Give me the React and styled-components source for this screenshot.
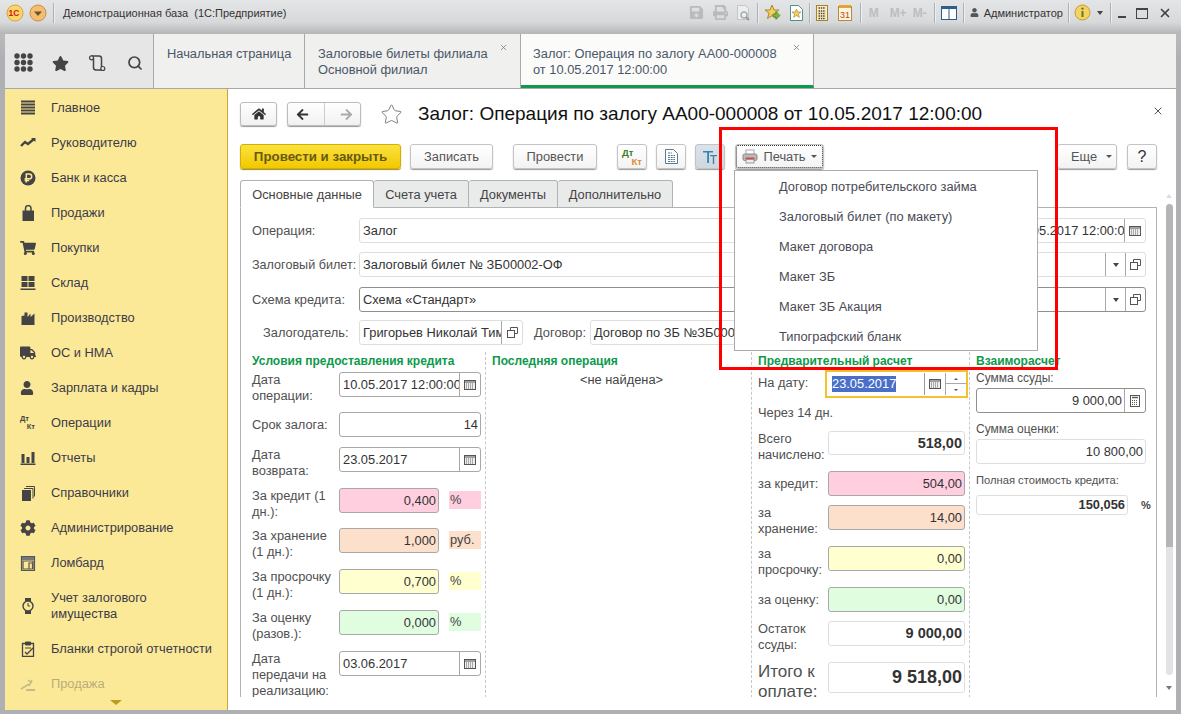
import styled, { createGlobalStyle } from 'styled-components';
import { FaStar, FaHome, FaArrowLeft, FaArrowRight, FaShoppingCart, FaTruck, FaUser, FaCog, FaPrint, FaSave } from 'react-icons/fa';
import { Search, Star, X } from 'lucide-react';

const Global = createGlobalStyle`
  html, body { margin: 0; padding: 0; overflow: hidden; background: #b4b5b8; }
  * { box-sizing: border-box; }
`;

const Window = styled.div`
  width: 1181px;
  height: 714px;
  display: flex;
  flex-direction: column;
  padding: 0 5px 4px;
  font-family: "Liberation Sans", Arial, sans-serif;
  font-size: 12.85px;
  color: #444;
  background: linear-gradient(#dcdde0, #b9babc 34px, #aeb0b3 60px);
  overflow: hidden;
`;

const TitleBar = styled.div`
  height: 34px;
  margin: 0 -5px;
  padding: 0 9px 9px 6px;
  display: flex;
  align-items: center;
  flex: none;
  background: linear-gradient(#e4e5e7, #d8d9db 65%, #b3b5b6);
`;

const TitleText = styled.span`
  margin-left: 3px;
  font-size: 11px;
  color: #333;
  white-space: pre;
`;

const TitleTools = styled.div`
  margin-left: auto;
  display: flex;
  align-items: center;
`;

const Sep = styled.i`
  width: 1px;
  height: 20px;
  margin: 0 ${(p) => p.$m ?? 6}px;
  background: #aeb0b2;
  box-shadow: 1px 0 0 #eee;
`;

const ToolSlot = styled.span`
  display: inline-flex;
  align-items: center;
  justify-content: center;
  margin-right: ${(p) => p.$gap ?? 7}px;
  color: ${(p) => p.$color || '#b9bbbd'};
`;

const MemKey = styled.b`
  width: ${(p) => p.$w}px;
  margin-right: ${(p) => p.$mr ?? 6}px;
  font-size: 12px;
  color: #bcbdbe;
  text-align: center;
`;

const UserName = styled.span`
  font-size: 11px;
  color: #333;
  margin-left: 5px;
`;

const TabStrip = styled.div`
  height: 55px;
  flex: none;
  display: flex;
  border-bottom: 1px solid #a5a7a8;
  background: #f0f0ee;
`;

const QuickIcons = styled.div`
  width: 149px;
  display: flex;
  align-items: center;
  padding: 4px 0 0 9px;
  background: #e6e6e6;
  border-right: 1px solid #a9a9a9;
  color: #444;
`;

const QuickSlot = styled.span`
  display: flex;
  margin-left: ${(p) => p.$ml || 0}px;
`;

const OpenTab = styled.div`
  position: relative;
  width: ${(p) => p.$w}px;
  flex: none;
  padding: 12px 0 0 ${(p) => p.$pl ?? 13}px;
  line-height: 16px;
  color: #4a5668;
  border-right: 1px solid #a9a9a9;
  background: ${(p) => (p.$active ? '#fbfbfa' : '#f0f0ee')};
  border-bottom: ${(p) => (p.$active ? '3px solid #0d9a4e' : 'none')};
`;

const TabClose = styled(X)`
  position: absolute;
  top: 9px;
  right: 12px;
  color: #777;
`;

const Body = styled.div`
  flex: 1;
  min-height: 0;
  display: flex;
`;

const Sidebar = styled.nav`
  position: relative;
  width: 223px;
  flex: none;
  padding-top: 1px;
  background: #fbe998;
  border-right: 1px solid #c7a92e;
  overflow: hidden;
`;

const NavItem = styled.div`
  height: ${(p) => (p.$tall ? 51 : 35)}px;
  display: flex;
  align-items: center;
  color: #3b3b48;
  line-height: 16px;
  opacity: ${(p) => (p.$faded ? 0.35 : 1)};
`;

const NavIcon = styled.span`
  width: 46px;
  flex: none;
  padding-left: 15px;
  display: flex;
  color: #444;
`;

const MoreArrow = styled.i`
  position: absolute;
  left: 105px;
  bottom: 5px;
  border: 6px solid transparent;
  border-bottom: 0;
  border-top: 5px solid #b79f1c;
`;

const Main = styled.main`
  position: relative;
  flex: 1;
  min-width: 0;
  display: flex;
  flex-direction: column;
  padding: 13px 0 0 12px;
  background: #fff;
`;

const HeaderRow = styled.div`
  height: 24px;
  flex: none;
  margin: 0 19px 18px 0;
  display: flex;
  align-items: center;
`;

const FormTitle = styled.h1`
  margin: 0 0 0 15px;
  font-size: 19px;
  font-weight: normal;
  color: #111;
  white-space: nowrap;
`;

const SquareBtn = styled.div`
  width: ${(p) => p.$w}px;
  height: 24px;
  flex: none;
  display: flex;
  align-items: center;
  justify-content: center;
  margin-right: ${(p) => p.$mr ?? 10}px;
  color: #333;
  background: linear-gradient(#fff, #f1f1f1);
  border: 1px solid #bcbcbc;
  border-radius: 3px;
  box-shadow: 0 1px 1px #999;
`;

const NavPair = styled(SquareBtn)`
  justify-content: space-around;
  padding: 0;
`;

const NavDivider = styled.i`
  width: 1px;
  height: 100%;
  background: #ccc;
`;

const CloseForm = styled(X)`
  margin: 0 -7px 0 auto;
  color: #555;
  position: relative;
  top: -3px;
`;

const CommandBar = styled.div`
  height: 26px;
  flex: none;
  margin: 0 19px 10px 0;
  display: flex;
  align-items: flex-start;
`;

const Btn = styled.div`
  height: 25px;
  width: ${(p) => p.$w}px;
  flex: none;
  margin-right: ${(p) => p.$mr ?? 10}px;
  display: flex;
  align-items: center;
  justify-content: center;
  gap: 5px;
  color: #555;
  background: ${(p) => (p.$pressed ? 'linear-gradient(#dbe2ea, #cfd7e1)' : 'linear-gradient(#fff, #f3f3f3)')};
  border: 1px solid #c4c4c4;
  border-radius: 3px;
  box-shadow: 0 1px 1px #999;
`;

const PrimaryBtn = styled(Btn)`
  font-weight: bold;
  font-size: 13.3px;
  color: #655a14;
  background: linear-gradient(#fbe23f, #f3c800);
  border-color: #d3b000;
  box-shadow: 0 1px 1px #a08a20;
`;

const PrintBtn = styled(Btn)`
  outline: 1px dotted #333;
  outline-offset: -2px;
`;

const MoreBtn = styled(Btn)`
  margin-left: auto;
  padding-left: 9px;
  gap: 9px;
`;

const HelpBtn = styled(Btn)`
  font-size: 16px;
  color: #333;
`;

const Caret = styled.i`
  border: 3px solid transparent;
  border-bottom: 0;
  border-top: 3px solid #555;
`;

const DtKt = styled.span`
  position: relative;
  width: ${(p) => p.$size || 20}px;
  height: ${(p) => p.$size || 18}px;
  font: bold ${(p) => (p.$size ? 7.5 : 9.5)}px/${(p) => (p.$size ? 7.5 : 9)}px "Liberation Sans", sans-serif;
  color: ${(p) => p.$c1 || '#3f7d1c'};
  display: block;
  & > b { position: absolute; right: 0; bottom: 0; color: ${(p) => p.$c2 || '#e08a3a'}; }
`;

const PageTabs = styled.div`
  height: 28px;
  flex: none;
  display: flex;
  align-items: stretch;
  position: relative;
  margin-bottom: -1px;
`;

const PageTab = styled.div`
  width: ${(p) => p.$w}px;
  display: flex;
  align-items: center;
  justify-content: center;
  border: 1px solid #b2b2b2;
  border-left: ${(p) => (p.$first ? '1px solid #b2b2b2' : 'none')};
  border-radius: 3px 3px 0 0;
  color: #444;
  background: ${(p) => (p.$active ? '#fff' : '#e9eaea')};
  border-bottom: ${(p) => (p.$active ? '1px solid #fff' : '1px solid #b2b2b2')};
  position: relative;
  z-index: 1;
`;

const PanelRow = styled.div`
  flex: 1;
  min-height: 0;
  display: flex;
  margin-bottom: 13px;
`;

const Panel = styled.div`
  flex: 1;
  min-width: 0;
  padding: 10px 10px 0 11px;
  border: 1px solid #b2b2b2;
  border-bottom: none;
  overflow: hidden;
`;

const ScrollTrack = styled.div`
  width: 19px;
  flex: none;
  margin-top: -15px;
  display: flex;
  flex-direction: column;
  align-items: center;
  padding: 0 0 0 5px;
`;

const ScrollUp = styled.i`
  margin-top: 2px;
  border: 3px solid transparent;
  border-top: 0;
  border-bottom: 4px solid #ddd;
`;

const ScrollRail = styled.div`
  width: 7px;
  height: 471px;
  margin: 6px 0 11px;
  border-radius: 4px;
  background: linear-gradient(#b5b5b5 0, #b5b5b5 343px, #e3e3e3 343px);
`;

const ScrollDown = styled.i`
  border: 3px solid transparent;
  border-bottom: 0;
  border-top: 4px solid #777;
`;

const Row = styled.div`
  display: flex;
  height: ${(p) => p.$h}px;
  padding-left: ${(p) => p.$pl || 0}px;
  flex: none;
`;

const RowLabel = styled.div`
  width: ${(p) => p.$w}px;
  flex: none;
  margin-left: ${(p) => p.$ml || 0}px;
  line-height: ${(p) => p.$lh || 16}px;
  font-size: ${(p) => p.$fs || 12.85}px;
  color: #505050;
  height: ${(p) => (p.$center ? `${p.$center}px` : 'auto')};
  display: ${(p) => (p.$center ? 'flex' : 'block')};
  align-items: center;
  white-space: pre-line;
`;

const Field = styled.div`
  width: ${(p) => (p.$w ? `${p.$w}px` : 'auto')};
  flex: ${(p) => (p.$w ? 'none' : 1)};
  min-width: 0;
  height: ${(p) => p.$h || 25}px;
  display: flex;
  align-items: stretch;
  background: ${(p) => p.$bg || '#fff'};
  border: 1px solid ${(p) => (p.$light ? '#dedede' : p.$dark ? '#8f8f8f' : '#a8a8a8')};
  border-radius: 3px;
  color: #333;
`;

const FieldText = styled.span`
  flex: 1;
  min-width: 0;
  overflow: hidden;
  white-space: nowrap;
  padding: 0 2px 0 3px;
  text-align: ${(p) => (p.$right ? 'right' : 'left')};
  line-height: ${(p) => (p.$h || 25) - 2}px;
  font-weight: ${(p) => (p.$bold ? 'bold' : 'normal')};
  font-size: ${(p) => p.$fs || 12.85}px;
  color: #333;
`;

const FieldBtn = styled.span`
  width: ${(p) => p.$w || 21}px;
  flex: none;
  display: flex;
  align-items: center;
  justify-content: center;
  border-left: 1px solid #a8a8a8;
  color: #555;
`;

const Columns = styled.div`
  display: flex;
  height: 346px;
  margin-top: 7px;
`;

const Col = styled.div`
  width: ${(p) => (p.$w ? `${p.$w}px` : 'auto')};
  flex: ${(p) => (p.$w ? 'none' : 1)};
  min-width: 0;
  padding-left: ${(p) => (p.$first ? 0 : 6)}px;
  padding-right: ${(p) => p.$pr || 0}px;
  border-left: ${(p) => (p.$first ? 'none' : '1px dashed #c8c8c8')};
`;

const GroupTitle = styled.div`
  height: ${(p) => p.$h || 20}px;
  line-height: 18px;
  font-weight: bold;
  font-size: 12px;
  color: #0c9a4c;
  white-space: nowrap;
`;

const NotFound = styled.div`
  text-align: center;
  line-height: 16px;
  color: #444;
`;

const Unit = styled.span`
  width: 32px;
  height: 18px;
  margin: 3px 0 0 10px;
  padding-left: 1px;
  line-height: 18px;
  flex: none;
  background: ${(p) => p.$bg};
  color: #444;
`;

const DateFocus = styled.div`
  flex: 1;
  height: 28px;
  margin: 0 -3px;
  display: flex;
  align-items: center;
  border: 2px solid #f5c12e;
  background: #fff;
`;

const Selected = styled.span`
  margin-left: 5px;
  background: #4a6fc9;
  color: #fff;
  line-height: 16px;
  width: 64px;
`;

const CalBtn = styled(FieldBtn)`
  height: 22px;
  margin-left: auto;
  border-color: #999;
`;

const Spin = styled.span`
  width: 21px;
  height: 22px;
  flex: none;
  position: relative;
  border-left: 1px solid #a8a8a8;
  &::before { content: ''; position: absolute; left: 8px; top: 5px; border: 2px solid transparent; border-top: 0; border-bottom: 2px solid #555; }
  &::after { content: ''; position: absolute; left: 8px; bottom: 4px; border: 2px solid transparent; border-bottom: 0; border-top: 2px solid #555; }
`;

const SpinLine = styled.i`
  position: absolute;
  left: 0;
  right: 0;
  top: 10px;
  height: 1px;
  background: #aaa;
`;

const SmallLabel = styled.div`
  font-size: ${(p) => p.$fs || 12}px;
  line-height: 16px;
  color: #505050;
  margin: ${(p) => p.$m || 0};
  white-space: nowrap;
`;

const RowFlex = styled.div`
  display: flex;
  align-items: center;
`;

const PercentMark = styled.b`
  margin-left: 13px;
  font-size: 11px;
  color: #444;
`;

const Popup = styled.div`
  position: absolute;
  left: 506px;
  top: 81px;
  width: 304px;
  height: 181px;
  padding-top: 1px;
  background: #fff;
  border: 1px solid #ababab;
  z-index: 5;
`;

const PopupItem = styled.div`
  height: 30px;
  padding-left: 44px;
  line-height: 30px;
  color: #4a4a55;
  white-space: nowrap;
`;

const RedFrame = styled.div`
  position: absolute;
  left: 491px;
  top: 38px;
  width: 339px;
  height: 243px;
  border: 3px solid #f00;
  pointer-events: none;
  z-index: 6;
`;

const DropCaret = styled.i`
  border: 3.5px solid transparent;
  border-bottom: 0;
  border-top: 4px solid #444;
`;

/* icons */
const Svg = ({ s = 16, w, h, children, ...r }) => (
  <svg width={w || s} height={h || s} viewBox={`0 0 ${w || s} ${h || s}`} {...r}>{children}</svg>
);

const Logo1C = () => (
  <Svg s={18}>
    <circle cx="9" cy="9" r="8" fill="#f9d667" stroke="#d9a441" />
    <text x="2.5" y="12" fontSize="8.5" fontWeight="bold" fill="#d3141b" fontFamily="Liberation Sans">1С</text>
  </Svg>
);

const MenuBall = () => (
  <Svg s={18}>
    <circle cx="9" cy="9" r="8" fill="#f3bd72" stroke="#cf9042" />
    <path d="M5 7.5h8L9 12z" fill="#6b5233" />
  </Svg>
);

const Preview = () => (
  <Svg s={16}>
    <path d="M2.5.5h8l3 3v11h-11z" fill="#eee" stroke="#c3c5c6" />
    <circle cx="9" cy="10" r="3" fill="none" stroke="#9fb1b5" strokeWidth="1.5" />
    <path d="M11 12l3 3" stroke="#9a9a9a" strokeWidth="2" />
  </Svg>
);

const StarGo = () => (
  <Svg s={17}>
    <path d="M8 1l2 5h5l-4 3.2 1.5 5.3L8 11.5 3.5 14.5 5 9.2 1 6h5z" fill="#f4cf62" stroke="#a88a2c" />
    <path d="M9 10h3V7.500l4 4-4 4V13H9z" fill="#7cb83d" stroke="#4d7f1d" strokeWidth=".7" />
  </Svg>
);

const StarDoc = () => (
  <Svg w={13} h={16}>
    <path d="M.5.5h8l4 4v11H.5z" fill="#fff" stroke="#4f9089" />
    <path d="M6.5 4l1.200 3H11L8.400 9.200l1 3.200-2.900-2-2.900 2 1-3.200L2 7h3.300z" fill="#f4cf62" stroke="#9b822d" strokeWidth=".6" />
  </Svg>
);

const Calc = () => (
  <Svg w={12} h={16}>
    <rect x=".5" y=".5" width="11" height="15" fill="#f8edc8" stroke="#a9812d" />
    <path d="M2.500 3h7M2.500 6h7M2.500 8.500h7M2.500 11h7M2.500 13.500h7" stroke="#4d4d2d" strokeWidth="1.500" strokeDasharray="1.500 .8" />
  </Svg>
);

const Cal31 = () => (
  <Svg w={14} h={17}>
    <rect x=".5" y="2.500" width="13" height="14" fill="#fdf6de" stroke="#b8893a" />
    <path d="M1 1h12v3H1z" fill="#e2a33c" />
    <text x="2" y="14" fontSize="9" fill="#b54a20" fontFamily="Liberation Sans">31</text>
  </Svg>
);

const PanelsIcon = () => (
  <Svg s={16}>
    <rect x=".5" y="1.500" width="15" height="13" fill="#fff" stroke="#2e5d8f" />
    <path d="M8 2v12" stroke="#2e5d8f" />
    <path d="M1 2h14v2H1z" fill="#2e5d8f" />
  </Svg>
);

const InfoBall = () => (
  <Svg s={17}>
    <circle cx="8.500" cy="8.500" r="7.500" fill="#f5d264" stroke="#c79b35" />
    <path d="M8.500 7v6" stroke="#5f7c1d" strokeWidth="2" />
    <circle cx="8.500" cy="4.600" r="1.200" fill="#5f7c1d" />
  </Svg>
);

const Apps = () => (
  <Svg s={20}>
    {[3, 9.5, 16].flatMap((y) => [3, 9.5, 16].map((x) => <circle key={`${x}${y}`} cx={x} cy={y} r="2.700" fill="#444" />))}
  </Svg>
);

const HistoryScroll = () => (
  <Svg s={18}>
    <path d="M3 2h8a2.500 2.500 0 012.500 2.500V13M15 16H8a2.500 2.500 0 01-2.500-2.500V4" fill="none" stroke="#444" strokeWidth="1.500" />
    <circle cx="3.500" cy="3.800" r="2" fill="#e6e6e6" stroke="#444" strokeWidth="1.200" />
    <circle cx="14.800" cy="14.500" r="2" fill="#e6e6e6" stroke="#444" strokeWidth="1.200" />
  </Svg>
);

const CalendarMini = () => (
  <Svg w={12} h={10}>
    <rect x=".5" y=".5" width="11" height="9" fill="#eee" stroke="#555" />
    <path d="M1 2h10" stroke="#555" />
    <path d="M2 4h8M2 6h8M2 8h8" stroke="#666" strokeDasharray="1 1" />
  </Svg>
);

const CalcMini = () => (
  <Svg w={10} h={12}>
    <rect x=".5" y=".5" width="9" height="11" fill="#fff" stroke="#555" />
    <path d="M2 2.500h6" stroke="#555" strokeWidth="1.400" />
    <path d="M2 5.500h6M2 7.500h6M2 9.500h6" stroke="#555" strokeDasharray="1 1" />
  </Svg>
);

const Open = () => (
  <Svg s={11}>
    <path d="M3.500 3.500v-3h7v6h-3" fill="none" stroke="#555" />
    <rect x=".5" y="3.500" width="7" height="7" fill="none" stroke="#555" />
  </Svg>
);

const DocIcon = () => (
  <Svg w={13} h={15}>
    <path d="M.5.5h8l4 4v10H.5z" fill="#fff" stroke="#5a7a93" />
    <path d="M3 4h4M3 6.500h7M3 8.500h7M3 10.500h7M3 12.500h7" stroke="#5a7a93" strokeDasharray="2 .7" />
  </Svg>
);

const TtIcon = () => (
  <Svg w={16} h={16}>
    <path d="M1 2h10v1.600H7V14H5.200V3.600H1z" fill="#2f86b0" />
    <path d="M8 6h7v1.300h-2.800V15h-1.400V7.300H8z" fill="#4d7f9a" />
  </Svg>
);

const PrinterColor = () => (
  <Svg w={16} h={15}>
    <rect x="4" y="1" width="8" height="4.500" fill="#fff" stroke="#aaa" />
    <rect x="1" y="5" width="14" height="6.500" rx="1.500" fill="#b9b9b9" stroke="#888" />
    <rect x="3.500" y="8.500" width="9" height="2" fill="#d44" />
    <rect x="4" y="10.500" width="8" height="3.500" fill="#eee" stroke="#999" />
  </Svg>
);

const ic = { fill: '#444' };
const navIcons = {
  main: <Svg s={16}><path d="M1 2h14v2H1zM1 5h14v2H1zM1 8h14v2H1zM1 11h14v2H1zM1 14h14v2H1z" {...ic} transform="translate(0 -1.500)" /></Svg>,
  boss: <Svg s={16}><path d="M1 11l4-4 3 2 6-5" fill="none" stroke="#444" strokeWidth="2.400" /><path d="M11 3h4.500v4z" {...ic} /></Svg>,
  bank: <Svg s={16}><circle cx="8" cy="8" r="7.500" {...ic} /><path d="M6.300 12.500V4h3a2.300 2.300 0 010 4.800H4.600M4.600 10.600h4.600" fill="none" stroke="#fbe998" strokeWidth="1.500" /></Svg>,
  bag: <Svg s={16}><path d="M2.500 5.500h11.500V16H2.500z" {...ic} /><path d="M5.500 7V3.300a2.700 2.700 0 015.500 0V7" fill="none" stroke="#444" strokeWidth="1.500" /></Svg>,
  cart: <FaShoppingCart size={16} color="#444" />,
  store: <Svg s={16}><path d="M1.500 1h6v5h-6zM8.500 1h6v5h-6zM1.500 7h6v5h-6zM8.500 7h6v5h-6zM0.500 13.500h15V15H.5z" {...ic} /></Svg>,
  factory: <Svg s={16}><path d="M1.500 15V6l3-.5V2.500h3V7l3-3.500V7l4-3.500V15z" {...ic} /></Svg>,
  truck: <FaTruck size={16} color="#444" />,
  person: <FaUser size={14} color="#444" />,
  dtkt: <DtKt $c1="#444" $c2="#444" $size={15}>Дт<b>Кт</b></DtKt>,
  chart: <Svg s={16}><path d="M1.500 4h3v9h-3zM6.500 7h3v6h-3zM11.500 2h3v11h-3zM.5 13.500h15V15H.5z" {...ic} /></Svg>,
  books: <Svg s={16}><path d="M2 5h9v11H2z" {...ic} /><path d="M4 3.500h9v10M6 1.500h8.500v10" fill="none" stroke="#444" /></Svg>,
  gear: <FaCog size={16} color="#444" />,
  shop: <Svg s={16}><path d="M1.500 1.500h13v14h-13zM2 4h12M3 6h10v8H3zM9 8h3.500v6H9z" fill="none" stroke="#555" strokeWidth="1.200" /><path d="M2 2h12v3H2z" fill="#777" /></Svg>,
  watch: <Svg s={16}><path d="M5 0h6v3H5zM5 13h6v3H5z" {...ic} /><circle cx="8" cy="8" r="5" fill="none" stroke="#444" strokeWidth="1.400" /><path d="M8 5v3h2" fill="none" stroke="#444" /></Svg>,
  form: <Svg s={16}><path d="M2.500 2.500h11v13h-11z" fill="none" stroke="#444" strokeWidth="1.300" /><path d="M5.500 1h5v3h-5zM5 7h6" {...ic} stroke="#444" /><path d="M5 11l2 2 6-6" fill="none" stroke="#444" strokeWidth="1.300" /></Svg>,
  gavel: <Svg s={16}><path d="M1 13l8-5M8 4l4 3M12 4l-3 6" stroke="#666" fill="none" strokeWidth="1.500" /><path d="M6 13h9v2H6z" fill="#666" /></Svg>,
};

const navItems = [
  ['main', 'Главное'], ['boss', 'Руководителю'], ['bank', 'Банк и касса'], ['bag', 'Продажи'],
  ['cart', 'Покупки'], ['store', 'Склад'], ['factory', 'Производство'], ['truck', 'ОС и НМА'],
  ['person', 'Зарплата и кадры'], ['dtkt', 'Операции'], ['chart', 'Отчеты'], ['books', 'Справочники'],
  ['gear', 'Администрирование'], ['shop', 'Ломбард'],
];

const printMenu = ['Договор потребительского займа', 'Залоговый билет (по макету)', 'Макет договора', 'Макет ЗБ', 'Макет ЗБ Акация', 'Типографский бланк'];

const PINK = '#ffcfe0';
const PEACH = '#fde0cb';
const LEMON = '#ffffd0';
const MINT = '#e0fde0';

const App = () => {
  return (
    <Window>
      <Global />
      <TitleBar>
        <Logo1C />
        <QuickSlot $ml={5}><MenuBall /></QuickSlot>
        <Sep $m={6} />
        <TitleText>Демонстрационная база  (1С:Предприятие)</TitleText>
        <TitleTools>
          <ToolSlot $gap={9}><FaSave size={15} /></ToolSlot>
          <ToolSlot $gap={7}><FaPrint size={15} /></ToolSlot>
          <ToolSlot $gap={0}><Preview /></ToolSlot>
          <Sep />
          <ToolSlot $gap={9}><StarGo /></ToolSlot>
          <ToolSlot $gap={0}><StarDoc /></ToolSlot>
          <Sep />
          <ToolSlot $gap={10}><Calc /></ToolSlot>
          <ToolSlot $gap={0}><Cal31 /></ToolSlot>
          <Sep $m={8} />
          <MemKey $w={10} $mr={11}>M</MemKey>
          <MemKey $w={16}>M+</MemKey>
          <MemKey $w={16} $mr={0}>M-</MemKey>
          <Sep />
          <ToolSlot $gap={0}><PanelsIcon /></ToolSlot>
          <Sep />
          <ToolSlot $gap={0} $color="#555"><FaUser size={9} /></ToolSlot>
          <UserName>Администратор</UserName>
          <Sep $m={5} />
          <ToolSlot $gap={6}><InfoBall /></ToolSlot>
          <DropCaret />
          <Sep $m={7} />
          <ToolSlot $gap={10} $color="#444"><Svg w={8} h={14}><path d="M0 10h8v2H0z" fill="#444" /></Svg></ToolSlot>
          <ToolSlot $gap={10} $color="#444"><Svg s={12}><rect x=".5" y="1.500" width="11" height="10" fill="none" stroke="#444" /><path d="M0 1h12v2H0z" fill="#444" /></Svg></ToolSlot>
          <ToolSlot $gap={0} $color="#444"><X size={14} strokeWidth={3} /></ToolSlot>
        </TitleTools>
      </TitleBar>

      <TabStrip>
        <QuickIcons>
          <Apps />
          <QuickSlot $ml={18}><FaStar size={17} /></QuickSlot>
          <QuickSlot $ml={19}><HistoryScroll /></QuickSlot>
          <QuickSlot $ml={21}><Search size={16} strokeWidth={2.6} /></QuickSlot>
        </QuickIcons>
        <OpenTab $w={151}>Начальная страница</OpenTab>
        <OpenTab $w={216}>Залоговые билеты филиала<br />Основной филиал<TabClose size={9} /></OpenTab>
        <OpenTab $w={293} $active $pl={12}>Залог: Операция по залогу АА00-000008<br />от 10.05.2017 12:00:00<TabClose size={9} /></OpenTab>
      </TabStrip>

      <Body>
        <Sidebar>
          {navItems.map(([icon, label]) => (
            <NavItem key={label}><NavIcon>{navIcons[icon]}</NavIcon>{label}</NavItem>
          ))}
          <NavItem $tall><NavIcon>{navIcons.watch}</NavIcon>Учет залогового<br />имущества</NavItem>
          <NavItem><NavIcon>{navIcons.form}</NavIcon>Бланки строгой отчетности</NavItem>
          <NavItem $faded><NavIcon>{navIcons.gavel}</NavIcon>Продажа</NavItem>
          <MoreArrow />
        </Sidebar>

        <Main>
          <HeaderRow>
            <SquareBtn $w={37}><FaHome size={14} /></SquareBtn>
            <NavPair $w={74} $mr={19}>
              <FaArrowLeft size={13} />
              <NavDivider />
              <FaArrowRight size={13} color="#aaa" />
            </NavPair>
            <Star size={23} strokeWidth={1} color="#777" />
            <FormTitle>Залог: Операция по залогу АА00-000008 от 10.05.2017 12:00:00</FormTitle>
            <CloseForm size={12} />
          </HeaderRow>

          <CommandBar>
            <PrimaryBtn $w={161} $mr={9}>Провести и закрыть</PrimaryBtn>
            <Btn $w={83} $mr={20}>Записать</Btn>
            <Btn $w={84} $mr={20}>Провести</Btn>
            <Btn $w={30} $mr={9}><DtKt>Дт<b>Кт</b></DtKt></Btn>
            <Btn $w={30} $mr={9}><DocIcon /></Btn>
            <Btn $w={30} $pressed><TtIcon /></Btn>
            <PrintBtn $w={89}><PrinterColor />Печать<Caret /></PrintBtn>
            <MoreBtn $w={60}>Еще<Caret /></MoreBtn>
            <HelpBtn $w={30} $mr={0}>?</HelpBtn>
          </CommandBar>

          <PageTabs>
            <PageTab $w={134} $first $active>Основные данные</PageTab>
            <PageTab $w={95}>Счета учета</PageTab>
            <PageTab $w={89}>Документы</PageTab>
            <PageTab $w={115}>Дополнительно</PageTab>
          </PageTabs>

          <PanelRow>
            <Panel>
              <Row $h={34}>
                <RowLabel $w={107} $center={25}>Операция:</RowLabel>
                <Field $light><FieldText>Залог</FieldText></Field>
                <RowLabel $w={26} $ml={10} $center={25}>от:</RowLabel>
                <Field $w={136} $light>
                  <FieldText>10.05.2017 12:00:00</FieldText>
                  <FieldBtn><CalendarMini /></FieldBtn>
                </Field>
              </Row>
              <Row $h={35}>
                <RowLabel $w={107} $fs={12.6} $center={25}>Залоговый билет:</RowLabel>
                <Field $light>
                  <FieldText>Залоговый билет № ЗБ00002-ОФ</FieldText>
                  <FieldBtn $w={20}><DropCaret /></FieldBtn>
                  <FieldBtn $w={20}><Open /></FieldBtn>
                </Field>
              </Row>
              <Row $h={33}>
                <RowLabel $w={107} $center={25}>Схема кредита:</RowLabel>
                <Field $dark>
                  <FieldText>Схема «Стандарт»</FieldText>
                  <FieldBtn $w={20}><DropCaret /></FieldBtn>
                  <FieldBtn $w={20}><Open /></FieldBtn>
                </Field>
              </Row>
              <Row $h={25} $pl={11}>
                <RowLabel $w={96} $center={25}>Залогодатель:</RowLabel>
                <Field $w={164} $light>
                  <FieldText>Григорьев Николай Тимофеевич</FieldText>
                  <FieldBtn><Open /></FieldBtn>
                </Field>
                <RowLabel $w={56} $ml={11} $center={25}>Договор:</RowLabel>
                <Field $w={146} $light><FieldText>Договор по ЗБ №ЗБ00002-ОФ</FieldText></Field>
              </Row>

              <Columns>
                <Col $w={233} $first>
                  <GroupTitle>Условия предоставления кредита</GroupTitle>
                  <Row $h={40}>
                    <RowLabel $w={87}>{'Дата\nоперации:'}</RowLabel>
                    <Field $w={142}><FieldText>10.05.2017 12:00:00</FieldText><FieldBtn><CalendarMini /></FieldBtn></Field>
                  </Row>
                  <Row $h={35}>
                    <RowLabel $w={87} $center={25}>Срок залога:</RowLabel>
                    <Field $w={142}><FieldText $right>14</FieldText></Field>
                  </Row>
                  <Row $h={41}>
                    <RowLabel $w={87}>{'Дата\nвозврата:'}</RowLabel>
                    <Field $w={142}><FieldText>23.05.2017</FieldText><FieldBtn><CalendarMini /></FieldBtn></Field>
                  </Row>
                  <Row $h={40}>
                    <RowLabel $w={87}>{'За кредит (1\nдн.):'}</RowLabel>
                    <Field $w={100} $bg={PINK}><FieldText $right>0,400</FieldText></Field>
                    <Unit $bg={PINK}>%</Unit>
                  </Row>
                  <Row $h={41}>
                    <RowLabel $w={87}>{'За хранение\n(1 дн.):'}</RowLabel>
                    <Field $w={100} $bg={PEACH}><FieldText $right>1,000</FieldText></Field>
                    <Unit $bg={PEACH}>руб.</Unit>
                  </Row>
                  <Row $h={41}>
                    <RowLabel $w={87}>{'За просрочку\n(1 дн.):'}</RowLabel>
                    <Field $w={100} $bg={LEMON}><FieldText $right>0,700</FieldText></Field>
                    <Unit $bg={LEMON}>%</Unit>
                  </Row>
                  <Row $h={41}>
                    <RowLabel $w={87}>{'За оценку\n(разов.):'}</RowLabel>
                    <Field $w={100} $bg={MINT}><FieldText $right>0,000</FieldText></Field>
                    <Unit $bg={MINT}>%</Unit>
                  </Row>
                  <Row $h={48}>
                    <RowLabel $w={87}>{'Дата\nпередачи на\nреализацию:'}</RowLabel>
                    <Field $w={142}><FieldText>03.06.2017</FieldText><FieldBtn><CalendarMini /></FieldBtn></Field>
                  </Row>
                </Col>

                <Col $w={266}>
                  <GroupTitle>Последняя операция</GroupTitle>
                  <NotFound>&lt;не найдена&gt;</NotFound>
                </Col>

                <Col $w={218} $pr={4}>
                  <GroupTitle $h={18}>Предварительный расчет</GroupTitle>
                  <Row $h={35}>
                    <RowLabel $w={70} $center={25}>На дату:</RowLabel>
                    <DateFocus>
                      <Selected>23.05.2017</Selected>
                      <CalBtn><CalendarMini /></CalBtn>
                      <Spin><SpinLine /></Spin>
                    </DateFocus>
                  </Row>
                  <Row $h={26}><RowLabel $w={120} $center={16}>Через 14 дн.</RowLabel></Row>
                  <Row $h={40}>
                    <RowLabel $w={70}>{'Всего\nначислено:'}</RowLabel>
                    <Field $light $h={24}><FieldText $right $bold $fs={14.5} $h={24}>518,00</FieldText></Field>
                  </Row>
                  <Row $h={34}>
                    <RowLabel $w={70} $center={25}>за кредит:</RowLabel>
                    <Field $bg={PINK}><FieldText $right>504,00</FieldText></Field>
                  </Row>
                  <Row $h={41}>
                    <RowLabel $w={70}>{'за\nхранение:'}</RowLabel>
                    <Field $bg={PEACH}><FieldText $right>14,00</FieldText></Field>
                  </Row>
                  <Row $h={41}>
                    <RowLabel $w={70}>{'за\nпросрочку:'}</RowLabel>
                    <Field $bg={LEMON}><FieldText $right>0,00</FieldText></Field>
                  </Row>
                  <Row $h={34}>
                    <RowLabel $w={70} $center={25}>за оценку:</RowLabel>
                    <Field $bg={MINT}><FieldText $right>0,00</FieldText></Field>
                  </Row>
                  <Row $h={41}>
                    <RowLabel $w={70}>{'Остаток\nссуды:'}</RowLabel>
                    <Field $light><FieldText $right $bold $fs={14.5}>9 000,00</FieldText></Field>
                  </Row>
                  <Row $h={36}>
                    <RowLabel $w={70} $fs={17} $lh={20}>{'Итого к\nоплате:'}</RowLabel>
                    <Field $light $h={31}><FieldText $right $bold $fs={18} $h={31}>9 518,00</FieldText></Field>
                  </Row>
                </Col>

                <Col>
                  <GroupTitle $h={18}>Взаиморасчет</GroupTitle>
                  <SmallLabel $m="0 0 2px">Сумма ссуды:</SmallLabel>
                  <Field $dark><FieldText $right>9 000,00</FieldText><FieldBtn><CalcMini /></FieldBtn></Field>
                  <SmallLabel $m="8px 0 2px">Сумма оценки:</SmallLabel>
                  <Field $light><FieldText $right>10 800,00</FieldText></Field>
                  <SmallLabel $m="8px 0 7px" $fs={11.2}>Полная стоимость кредита:</SmallLabel>
                  <RowFlex>
                    <Field $light $w={152} $h={20}><FieldText $right $bold $h={20}>150,056</FieldText></Field>
                    <PercentMark>%</PercentMark>
                  </RowFlex>
                </Col>
              </Columns>
            </Panel>
            <ScrollTrack>
              <ScrollUp />
              <ScrollRail />
              <ScrollDown />
            </ScrollTrack>
          </PanelRow>

          <Popup>
            {printMenu.map((item) => <PopupItem key={item}>{item}</PopupItem>)}
          </Popup>
          <RedFrame />
        </Main>
      </Body>
    </Window>
  );
};

export default App;
